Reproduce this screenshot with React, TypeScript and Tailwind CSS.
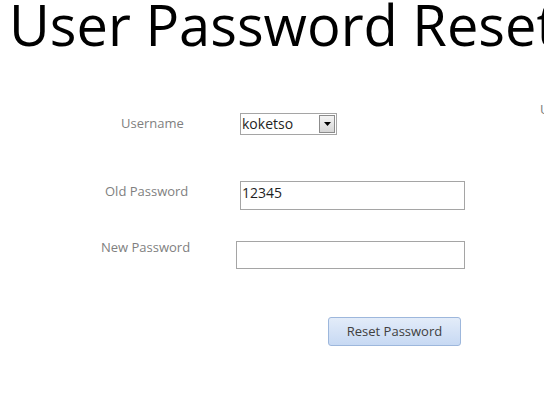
export default function App() {
  return (
    <div
      className="relative h-[409px] w-[544px] overflow-hidden bg-white"
      style={{ fontFamily: '"Open Sans", "Liberation Sans", sans-serif' }}
    >
      <h1 className="ml-[9px] mt-[-12px] whitespace-nowrap text-[56px] leading-[72px] text-black">
        User Password Reset
      </h1>

      <span className="absolute left-[540px] top-[100px] text-[13px] text-[#7f7f7f]">U</span>

      <div className="mt-[53px] flex items-center">
        <label className="ml-[121px] w-[119px] text-[13px] text-[#7f7f7f]">Username</label>
        <div className="flex h-[22px] w-[97px] items-center border border-[#a5a5a5] bg-white pl-[1px]">
          <span className="flex-1 text-[14px] leading-none text-[#1f1f1f]">koketso</span>
          <span className="mr-[1px] flex h-[18px] w-[16px] items-center justify-center border border-[#8c8c8c] bg-gradient-to-b from-[#f4f4f4] to-[#d6d6d6]">
            <svg width="7" height="4" viewBox="0 0 7 4">
              <path d="M0 0h7L3.5 4z" fill="#000" />
            </svg>
          </span>
        </div>
      </div>

      <div className="mt-[46px] flex items-start">
        <label className="ml-[105px] mt-[1px] w-[135px] text-[13px] text-[#7f7f7f]">Old Password</label>
        <div className="h-[29px] w-[225px] border border-[#a5a5a5] px-[1px] pt-[2px] text-[14px] leading-[18px] text-[#1f1f1f]">
          12345
        </div>
      </div>

      <div className="mt-[31px] flex items-start">
        <label className="ml-[101px] mt-[-3px] w-[135px] text-[13px] text-[#7f7f7f]">New Password</label>
        <div className="h-[28px] w-[229px] border border-[#a5a5a5]"></div>
      </div>

      <button className="ml-[328px] mt-[48px] h-[29px] w-[133px] rounded-[3px] border border-[#9db7dc] bg-gradient-to-b from-[#e3ecf9] to-[#c7d9f3] text-[13px] text-[#404040]">
        Reset Password
      </button>
    </div>
  );
}
